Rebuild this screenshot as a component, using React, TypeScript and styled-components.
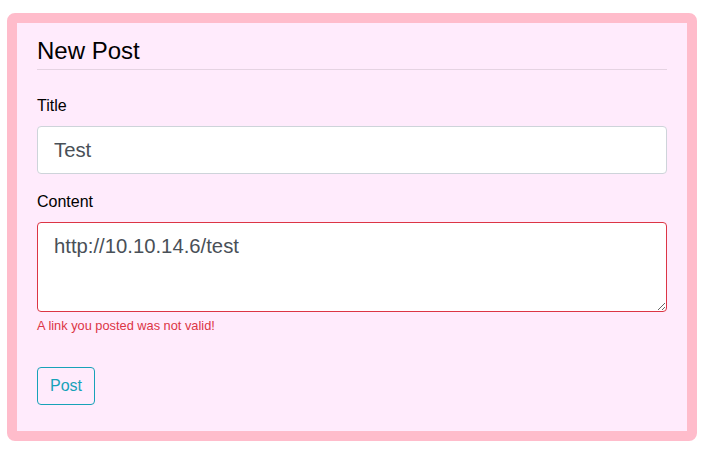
import React from "react";
import styled, { createGlobalStyle } from "styled-components";

const Global = createGlobalStyle`
  html, body { margin: 0; padding: 0; background: #ffffff; }
  body {
    font-family: "Liberation Sans", Arial, Helvetica, sans-serif;
    font-size: 16px;
    line-height: 1.5;
    color: #212529;
  }
  * { box-sizing: border-box; }
`;

const Frame = styled.div`
  margin: 13px 10px 8px 7px;
  width: 690px;
  height: 428px;
  border: 10px solid #ffbccb;
  border-radius: 8px;
  background: #ffebfc;
  padding: 14px 20px 0 20px;
`;

const Header = styled.div`
  border-bottom: 1px solid rgba(0, 0, 0, 0.1);
  padding-bottom: 3px;
  margin-bottom: 24px;
`;

const Heading = styled.h4`
  margin: 0;
  font-size: 24px;
  font-weight: 400;
  line-height: 1.2;
  color: #000;
`;

const FormGroup = styled.div`
  margin-bottom: 16px;
`;

const Label = styled.label`
  display: block;
  margin-bottom: 8px;
  color: #000;
`;

const Input = styled.input<{ $invalid?: boolean }>`
  display: block;
  width: 100%;
  height: 48px;
  padding: 9px 16px 7px 16px;
  font-family: inherit;
  font-size: 20.3px;
  line-height: 1.5;
  color: #495057;
  background: #fff;
  border: 1px solid ${(p) => (p.$invalid ? "#dc3545" : "#ced4da")};
  border-radius: 4px;
  outline: none;
`;

const TextArea = styled.textarea<{ $invalid?: boolean }>`
  display: block;
  width: 100%;
  height: 90px;
  padding: 8px 16px;
  font-family: inherit;
  font-size: 20.3px;
  line-height: 1.5;
  color: #495057;
  background: #fff;
  border: 1px solid ${(p) => (p.$invalid ? "#dc3545" : "#ced4da")};
  border-radius: 4px;
  outline: none;
  resize: vertical;
`;

const Feedback = styled.div`
  margin-top: 4px;
  font-size: 12.8px;
  line-height: 1.5;
  color: #dc3545;
`;

const Actions = styled.div`
  padding-top: 16px;
`;

const Button = styled.button`
  display: inline-block;
  height: 38px;
  padding: 6px 12px;
  font-family: inherit;
  font-size: 16px;
  line-height: 1.5;
  color: #17a2b8;
  background: transparent;
  border: 1px solid #17a2b8;
  border-radius: 4px;
  cursor: pointer;
`;

export default function App() {
  return (
    <>
      <Global />
      <Frame>
        <Header>
          <Heading>New Post</Heading>
        </Header>
        <FormGroup>
          <Label htmlFor="title">Title</Label>
          <Input id="title" defaultValue="Test" />
        </FormGroup>
        <FormGroup>
          <Label htmlFor="content">Content</Label>
          <TextArea id="content" $invalid defaultValue="http://10.10.14.6/test" />
          <Feedback>A link you posted was not valid!</Feedback>
        </FormGroup>
        <Actions>
          <Button type="button">Post</Button>
        </Actions>
      </Frame>
    </>
  );
}
